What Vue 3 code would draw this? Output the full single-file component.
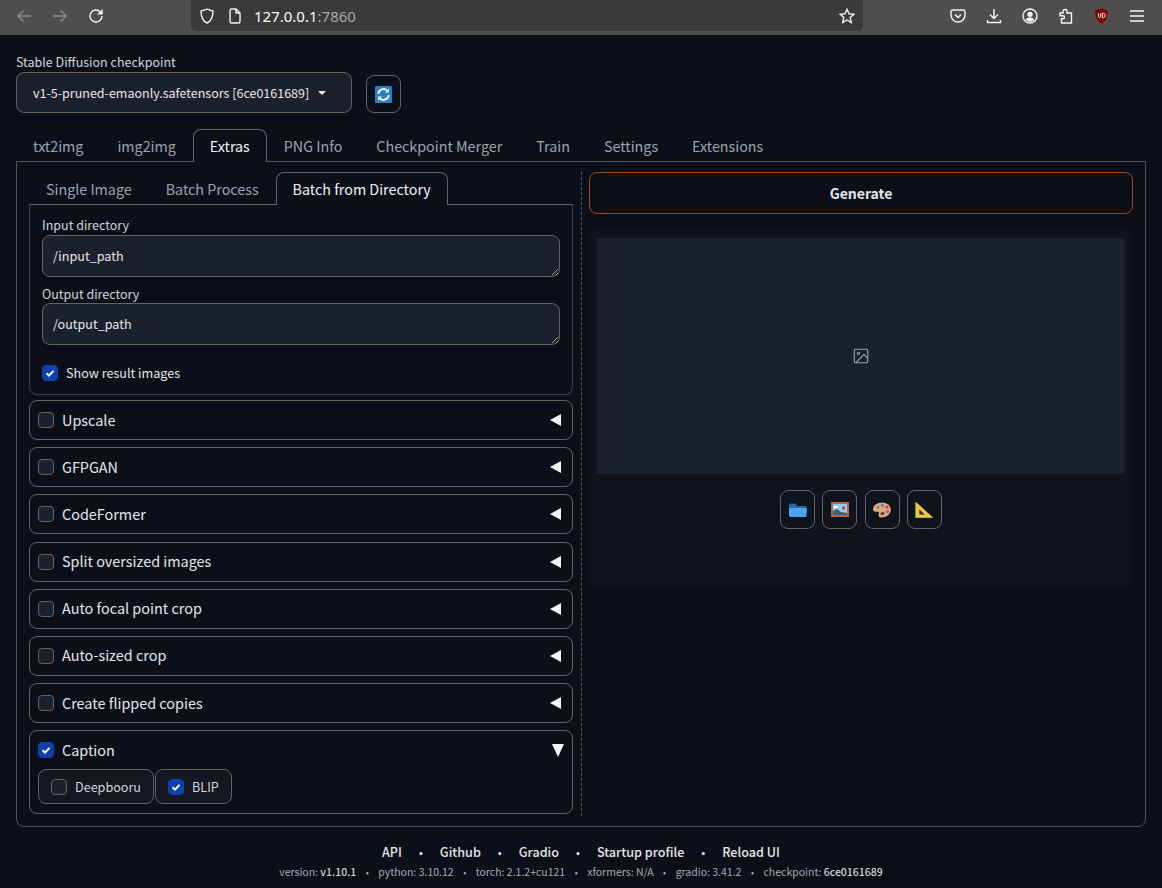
<script setup>
import { ref } from 'vue'

const mainTabs = ['txt2img', 'img2img', 'Extras', 'PNG Info', 'Checkpoint Merger', 'Train', 'Settings', 'Extensions']
const subTabs = ['Single Image', 'Batch Process', 'Batch from Directory']
const accordions = ['Upscale', 'GFPGAN', 'CodeFormer', 'Split oversized images', 'Auto focal point crop', 'Auto-sized crop', 'Create flipped copies']
const links = ['API', 'Github', 'Gradio', 'Startup profile', 'Reload UI']
const inputDir = ref('/input_path')
const outputDir = ref('/output_path')
</script>

<template>
  <div class="browser">
    <div class="nav">
      <svg class="ico dim" viewBox="0 0 16 16"><path d="M15 8H2M7.500 2.500 2 8l5.500 5.500" /></svg>
      <svg class="ico dim" viewBox="0 0 16 16"><path d="M1 8h13M8.500 2.500 14 8l-5.500 5.500" /></svg>
      <svg class="ico" viewBox="0 0 16 16"><path d="M14 8a6 6 0 1 1-1.800-4.300L14 5.500" /><path class="fill" d="M14.700 1v5.500H9.200z" /></svg>
    </div>
    <div class="urlbar">
      <svg class="ico" viewBox="0 0 16 16"><path d="M8 1.200 14 3c0 6-1.500 10-6 12C3.500 13 2 9 2 3z" /></svg>
      <svg class="ico page" viewBox="0 0 16 16"><path d="M3 2.500C3 1.700 3.700 1 4.500 1H9l4 4v8.500c0 .8-.7 1.500-1.500 1.500h-7C3.700 15 3 14.300 3 13.500zM9 1v4h4" /></svg>
      <span class="url">127.0.0.1<span class="port">:7860</span></span>
      <svg class="ico star" viewBox="0 0 16 16"><path d="m8 1.300 2 4.500 4.900.5-3.700 3.300 1.100 4.900L8 12l-4.300 2.500 1.100-4.900L1.100 6.300 6 5.800z" /></svg>
    </div>
    <div class="tools">
      <svg class="ico" viewBox="0 0 16 16"><path d="M2.500 2h11c.8 0 1.500.7 1.500 1.500V7a7 7 0 0 1-14 0V3.500C1 2.700 1.700 2 2.500 2z" /><path d="M5 6.500 8 9.500l3-3" /></svg>
      <svg class="ico" viewBox="0 0 16 16"><path d="M8 1v9.500M4 6.500l4 4 4-4M1.500 12v2.500h13V12" /></svg>
      <svg class="ico" viewBox="0 0 16 16"><circle cx="8" cy="8" r="7" /><circle class="fill" cx="8" cy="6.300" r="2.600" /><path class="fill" d="M3.800 12c.5-2 2.300-2.500 4.200-2.500s3.700.5 4.200 2.500c-1 1.200-2.500 1.800-4.200 1.800S4.800 13.200 3.800 12z" /></svg>
      <svg class="ico" viewBox="0 0 16 16"><path d="M7 1.500c1.300 0 2 .8 2 1.800V5h4.500v10h-10v-4.200H5c1 0 1.500-.7 1.500-1.500S6 7.800 5 7.800H2V5h3V3.300c0-1 .7-1.800 2-1.800z" /></svg>
      <svg class="ublock" viewBox="0 0 16 18"><path d="M8 .5 15 2.500c.3 7-1.500 12-7 15C2.500 14.500.7 9.500 1 2.500z" fill="#800000" /><path d="M4.500 6v3.500c0 1.500 2.500 1.500 2.500 0V6M9 6v5h1.200c2.600 0 2.600-5 0-5z" fill="none" stroke="#fff" stroke-width="1.100" /></svg>
      <svg class="ico" viewBox="0 0 16 16"><path d="M1 3h14M1 8h14M1 13h14" /></svg>
    </div>
  </div>

  <div class="page-wrap">
    <div class="ckpt-row">
      <div class="ckpt">
        <div class="field-label">Stable Diffusion checkpoint</div>
        <div class="select">
          <span>v1-5-pruned-emaonly.safetensors [6ce0161689]</span>
          <span class="caret"></span>
        </div>
      </div>
      <button class="tool-btn refresh">
        <svg width="17" height="17" viewBox="0 0 17 17">
          <rect width="17" height="17" rx="1.500" fill="#2a7fc9" />
          <path d="M3.300 8a5.200 5.200 0 0 1 9-3.200M13.700 9a5.200 5.200 0 0 1-9 3.200" fill="none" stroke="#e8f2fb" stroke-width="2" />
          <path d="M14 2.500v4h-4zM3 14.500v-4h4z" fill="#e8f2fb" />
        </svg>
      </button>
    </div>

    <div class="tabs main-tabs">
      <button v-for="t in mainTabs" :key="t" class="tab" :class="{ active: t === 'Extras' }">{{ t }}</button>
    </div>

    <div class="main-panel">
      <div class="left">
        <div class="tabs sub-tabs">
          <button v-for="t in subTabs" :key="t" class="tab" :class="{ active: t === 'Batch from Directory' }">{{ t }}</button>
        </div>
        <div class="dir-panel">
          <label class="field">
            <span class="field-label">Input directory</span>
            <textarea v-model="inputDir" class="text" rows="1"></textarea>
          </label>
          <label class="field">
            <span class="field-label">Output directory</span>
            <textarea v-model="outputDir" class="text" rows="1"></textarea>
          </label>
          <div class="show-result">
            <span class="check on"><svg viewBox="0 0 16 16"><path d="m4 8.300 2.800 2.700L12 5.500" /></svg></span>
            <span>Show result images</span>
          </div>
        </div>

        <div v-for="a in accordions" :key="a" class="accordion">
          <div class="acc-head">
            <span class="check"></span>
            <span class="acc-title">{{ a }}</span>
            <span class="arrow-left"></span>
          </div>
        </div>

        <div class="accordion open">
          <div class="acc-head">
            <span class="check on"><svg viewBox="0 0 16 16"><path d="m4 8.300 2.800 2.700L12 5.500" /></svg></span>
            <span class="acc-title">Caption</span>
            <span class="arrow-down"></span>
          </div>
          <div class="chips">
            <div class="chip"><span class="check"></span>Deepbooru</div>
            <div class="chip"><span class="check on"><svg viewBox="0 0 16 16"><path d="m4 8.300 2.800 2.700L12 5.500" /></svg></span>BLIP</div>
          </div>
        </div>
      </div>

      <div class="divider"></div>

      <div class="right">
        <button class="generate">Generate</button>
        <div class="gallery-box">
          <div class="gallery">
            <svg class="img-ph" viewBox="0 0 24 24"><rect x="3" y="3" width="18" height="18" rx="2" /><circle cx="8.500" cy="8.500" r="1.500" /><path d="m21 15-5-5L5 21" /></svg>
          </div>
          <div class="actions">
            <button class="tool-btn">
              <svg width="18" height="16" viewBox="0 0 18 16"><path d="M0 3c0-1 .7-1.500 1.500-1.500h5L8.500 4H16c1 0 1.500.6 1.500 1.500V8H0z" fill="#1f6aa8" /><path d="M1 6h15.500c.9 0 1.500.6 1.500 1.500l-.5 6c0 .9-.6 1.500-1.500 1.500H2c-1 0-2-.6-2-1.500V7c0-.6.4-1 1-1z" fill="#4ba3ec" /></svg>
            </button>
            <button class="tool-btn">
              <svg width="18" height="15" viewBox="0 0 18 15"><rect width="18" height="15" fill="#b0694e" /><rect x="2" y="2" width="14" height="11" fill="#8fd0f2" /><path d="M2 4h5v2H2z" fill="#fff" /><path d="M2 13V9l4-2 4 3 6 1v2z" fill="#3f5f78" /><circle cx="12.500" cy="6" r="1.700" fill="#d8304a" /></svg>
            </button>
            <button class="tool-btn">
              <svg width="18" height="16" viewBox="0 0 18 16"><path d="M9 .5c5 0 9 3 8.800 7.500-.2 4.500-4.500 7.500-9 7.500-3 0-4-2-3-3.500.8-1.300 0-2.500-1.800-2.300C2 10 0 9.500 0 7.500 0 3.500 4 .5 9 .5z" fill="#e3a57c" /><circle cx="5" cy="5" r="1.500" fill="#57a43f" /><circle cx="9.500" cy="3.300" r="1.500" fill="#3a7fd0" /><circle cx="14" cy="5" r="1.500" fill="#d8304a" /><circle cx="14.500" cy="9.500" r="1.500" fill="#8c5fb0" /><ellipse cx="9.500" cy="11.500" rx="2" ry="1.500" fill="#55402f" /></svg>
            </button>
            <button class="tool-btn">
              <svg width="18" height="16" viewBox="0 0 18 16"><path d="M0 0v16h18z" fill="#5ba63e" /><path fill-rule="evenodd" d="M1 0v15.500h17zM4.500 7.500v5h5z" fill="#f5c33b" /><path d="M4.500 7.500v5h5z" fill="#292e38" /></svg>
            </button>
          </div>
        </div>
      </div>
    </div>

    <div class="footer">
      <div class="links">
        <template v-for="(l, i) in links" :key="l">
          <span v-if="i" class="dot">•</span>
          <a>{{ l }}</a>
        </template>
      </div>
      <div class="versions">
        version: <b>v1.10.1</b><span class="sep">•</span>python: 3.10.12<span class="sep">•</span>torch: 2.1.2+cu121<span class="sep">•</span>xformers: N/A<span class="sep">•</span>gradio: 3.41.2<span class="sep">•</span>checkpoint: <b>6ce0161689</b>
      </div>
    </div>
  </div>
</template>

<style>
html, body { background: #0b0f19; }
</style>

<style scoped>
* { box-sizing: border-box; }

button {
  font: inherit;
  background: none;
  border: 0;
  color: inherit;
  padding: 0;
}

.browser {
  height: 35px;
  background: #4f4f4f;
  display: flex;
  align-items: flex-start;
}
.ico {
  width: 16px;
  height: 16px;
  fill: none;
  stroke: #f4f4f4;
  stroke-width: 1.400;
  flex: none;
}
.ico .fill { fill: #f4f4f4; stroke: none; }
.ico.dim { stroke: #8f8f8f; }
.nav {
  width: 191px;
  height: 31px;
  display: flex;
  align-items: center;
  gap: 20px;
  padding-left: 16px;
}
.urlbar {
  width: 672px;
  height: 31px;
  background: #3a3a3a;
  border-radius: 0 0 5px 5px;
  display: flex;
  align-items: center;
  padding: 0 8px;
  color: #fbfbfe;
}
.page { margin-left: 12px; }
.url {
  margin-left: 11px;
  font-size: 15px;
  font-family: "Noto Sans", sans-serif;
}
.port { color: #a8a8a8; }
.star { margin-left: auto; }
.tools {
  flex: 1;
  height: 31px;
  display: flex;
  align-items: center;
  gap: 20px;
  padding-left: 87px;
}
.ublock { width: 15px; height: 16px; flex: none; }

.page-wrap {
  background: #0b0f19;
  height: 853px;
  padding: 18px 16px 0;
  color: #f3f4f6;
  font-family: "Noto Sans CJK JP", "Noto Sans", sans-serif;
  font-size: 12.600px;
  overflow: hidden;
}

.ckpt-row {
  display: flex;
  align-items: flex-end;
  gap: 14px;
}
.ckpt { width: 336px; }
.field-label {
  display: block;
  color: #d1d5db;
  font-size: 12.500px;
  line-height: 18px;
  margin-bottom: 1px;
}
.select {
  height: 41px;
  margin-top: 1px;
  background: #1a212c;
  border: 1px solid #6b6259;
  border-radius: 8px;
  display: flex;
  align-items: center;
  gap: 9px;
  padding-left: 16px;
  color: #e5e7eb;
  font-size: 12.500px;
  white-space: nowrap;
}
.caret {
  width: 0;
  height: 0;
  border: 4.500px solid transparent;
  border-top: 4.500px solid #e5e7eb;
  border-bottom: 0;
}
.tool-btn {
  width: 35px;
  height: 38px;
  border: 1px solid #6b6259;
  border-radius: 8px;
  display: flex;
  align-items: center;
  justify-content: center;
  flex: none;
}

.tabs {
  display: flex;
  align-items: flex-end;
  font-size: 14.300px;
}
.main-tabs { margin-top: 15px; height: 33px; }
.tab {
  height: 33px;
  padding: 0 16px 2px;
  color: #9ca3af;
  border: 1px solid transparent;
  border-bottom: 0;
  border-radius: 8px 8px 0 0;
  margin-bottom: -1px;
  position: relative;
  white-space: nowrap;
}
.tab.active {
  color: #f3f4f6;
  background: #0b0f19;
  border-color: #6b6259;
}

.main-panel {
  height: 666px;
  border: 1px solid #4b5563;
  border-radius: 0 0 8px 8px;
  padding: 10px 12px;
  display: flex;
}
.left {
  width: 544px;
  flex: none;
  display: flex;
  flex-direction: column;
}
.sub-tabs {
  height: 33px;
  border-bottom: 1px solid #6b6259;
  flex: none;
}
.dir-panel {
  height: 190px;
  flex: none;
  border: 1px solid #374151;
  border-top: 0;
  border-radius: 0 0 8px 8px;
  padding: 12px 12px 0;
}
.field { display: block; margin-bottom: 9px; }
.field .field-label { margin-bottom: 2px; line-height: 16px; }
.field + .field .field-label { margin-bottom: 1px; }
.text {
  display: block;
  width: 100%;
  height: 42px;
  background: #1a212c;
  border: 1px solid #6b6259;
  border-radius: 8px;
  color: #e5e7eb;
  font: inherit;
  line-height: 20px;
  padding: 10px;
  resize: vertical;
  outline: none;
}
.show-result {
  display: flex;
  align-items: center;
  gap: 8px;
  margin-top: 18px;
  color: #e5e7eb;
}

.check {
  width: 16px;
  height: 16px;
  flex: none;
  background: #1a212c;
  border: 1px solid #6b6259;
  border-radius: 4px;
  display: inline-block;
}
.check.on { background: #1040b0; border-color: #1040b0; }
.check svg {
  display: block;
  width: 14px;
  height: 14px;
  fill: none;
  stroke: #fff;
  stroke-width: 2.200;
}

.accordion {
  height: 40px;
  flex: none;
  margin-top: 7.200px;
  border: 1px solid #6b6259;
  border-radius: 8px;
  padding: 0 8px;
}
.accordion:nth-child(3) { margin-top: 5px; }
.accordion.open { height: 84px; }
.acc-head {
  height: 38px;
  display: flex;
  align-items: center;
  gap: 8px;
  font-size: 14.400px;
  color: #e5e7eb;
}
.acc-title { flex: 1; padding-bottom: 2px; }
.arrow-left {
  width: 0;
  height: 0;
  border: 6px solid transparent;
  border-right: 11px solid #f3f4f6;
  border-left: 0;
  margin-right: 3px;
}
.arrow-down {
  width: 0;
  height: 0;
  border: 6px solid transparent;
  border-top: 13px solid #f3f4f6;
  border-bottom: 0;
}
.chips { display: flex; gap: 1px; }
.chip {
  height: 35px;
  display: flex;
  align-items: center;
  gap: 8px;
  padding: 0 12px;
  background: #121721;
  border: 1px solid #6b6259;
  border-radius: 8px;
  color: #d1d5db;
}

.divider {
  width: 16px;
  flex: none;
  position: relative;
}
.divider::after {
  content: '';
  position: absolute;
  left: 8px;
  top: 0;
  bottom: 0;
  border-left: 1px dashed #4b5563;
}
.right { flex: 1; }
.generate {
  display: block;
  width: 100%;
  height: 42px;
  border: 1px solid #a14a0c;
  border-radius: 8px;
  font-size: 14px;
  font-weight: 600;
  color: #e5e7eb;
}
.gallery-box {
  margin-top: 16px;
  height: 356px;
  background: #0f131d;
  border-radius: 8px;
  padding: 8px;
}
.gallery {
  height: 236px;
  background: #1a212c;
  display: flex;
  align-items: center;
  justify-content: center;
}
.img-ph {
  width: 18px;
  height: 18px;
  fill: none;
  stroke: #9ca3af;
  stroke-width: 1.500;
}
.actions {
  margin-top: 16px;
  display: flex;
  justify-content: center;
  gap: 7.300px;
}
.actions .tool-btn { height: 39px; }

.footer {
  margin-top: 16px;
  text-align: center;
}
.links {
  font-weight: 500;
  color: #e5e7eb;
  line-height: 18px;
}
.dot { margin: 0 17px; font-size: 11px; }
.versions {
  margin-top: 3px;
  font-size: 10.500px;
  color: #a5abb5;
  line-height: 16px;
}
.versions b { color: #d1d5db; font-weight: 500; }
.sep { margin: 0 9.500px; font-size: 9px; }
</style>
